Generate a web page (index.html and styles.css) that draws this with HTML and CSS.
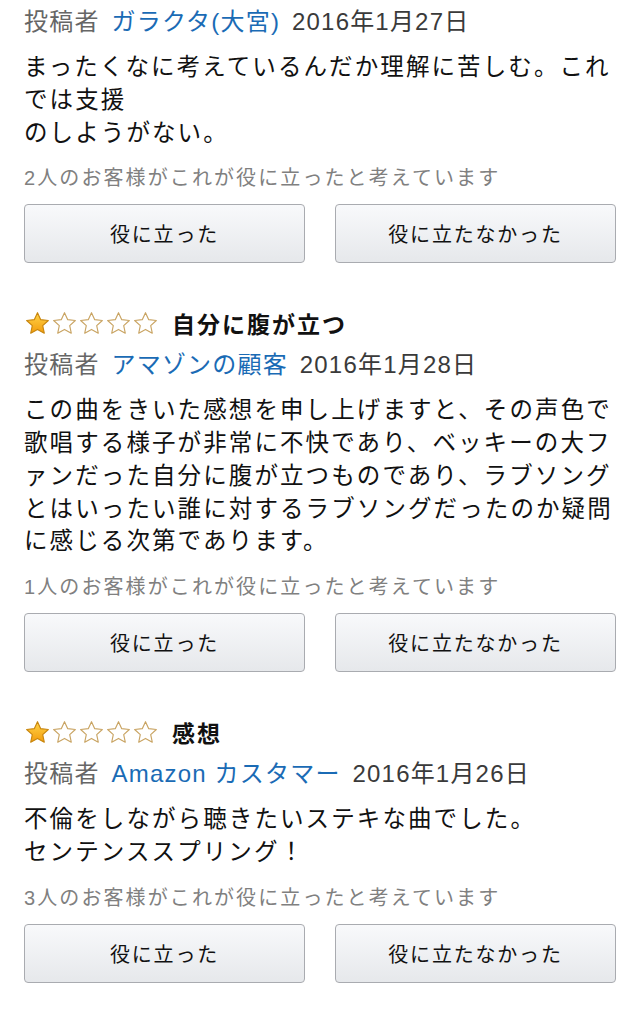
FILE: index.html
```html
<!DOCTYPE html>
<html lang="ja">
<head>
<meta charset="utf-8">
<title>カスタマーレビュー</title>
<link rel="stylesheet" href="styles.css">
</head>
<body>
<svg class="defs" width="0" height="0" aria-hidden="true">
  <defs>
    <linearGradient id="gold" x1="0" y1="0" x2="0" y2="1">
      <stop offset="0" stop-color="#ffd54a"/>
      <stop offset="1" stop-color="#f39c0c"/>
    </linearGradient>
    <path id="star" d="M12 1.6l3.1 6.7 7.3.8-5.4 5 1.5 7.2L12 17.7l-6.5 3.6 1.5-7.2-5.4-5 7.3-.8z"/>
  </defs>
</svg>
<main class="reviews">

  <section class="review">
    <div class="byline"><span class="label">投稿者</span> <a class="author" href="#">ガラクタ(大宮)</a> <span class="date">2016年1月27日</span></div>
    <p class="text">まったくなに考えているんだか理解に苦しむ。これでは支援<br>のしようがない。</p>
    <p class="helpful">2人のお客様がこれが役に立ったと考えています</p>
    <div class="votes">
      <button class="vote">役に立った</button>
      <button class="vote">役に立たなかった</button>
    </div>
  </section>

  <section class="review">
    <div class="title">
      <span class="stars">
        <svg viewBox="0 0 24 24" class="star on"><use href="#star"/></svg>
        <svg viewBox="0 0 24 24" class="star"><use href="#star"/></svg>
        <svg viewBox="0 0 24 24" class="star"><use href="#star"/></svg>
        <svg viewBox="0 0 24 24" class="star"><use href="#star"/></svg>
        <svg viewBox="0 0 24 24" class="star"><use href="#star"/></svg>
      </span>
      <strong class="headline">自分に腹が立つ</strong>
    </div>
    <div class="byline"><span class="label">投稿者</span> <a class="author" href="#">アマゾンの顧客</a> <span class="date">2016年1月28日</span></div>
    <p class="text">この曲をきいた感想を申し上げますと、その声色で歌唱する様子が非常に不快であり、ベッキーの大ファンだった自分に腹が立つものであり、ラブソングとはいったい誰に対するラブソングだったのか疑問に感じる次第であります。</p>
    <p class="helpful">1人のお客様がこれが役に立ったと考えています</p>
    <div class="votes">
      <button class="vote">役に立った</button>
      <button class="vote">役に立たなかった</button>
    </div>
  </section>

  <section class="review">
    <div class="title">
      <span class="stars">
        <svg viewBox="0 0 24 24" class="star on"><use href="#star"/></svg>
        <svg viewBox="0 0 24 24" class="star"><use href="#star"/></svg>
        <svg viewBox="0 0 24 24" class="star"><use href="#star"/></svg>
        <svg viewBox="0 0 24 24" class="star"><use href="#star"/></svg>
        <svg viewBox="0 0 24 24" class="star"><use href="#star"/></svg>
      </span>
      <strong class="headline">感想</strong>
    </div>
    <div class="byline"><span class="label">投稿者</span> <a class="author" href="#">Amazon カスタマー</a> <span class="date">2016年1月26日</span></div>
    <p class="text">不倫をしながら聴きたいステキな曲でした。<br>センテンススプリング！</p>
    <p class="helpful">3人のお客様がこれが役に立ったと考えています</p>
    <div class="votes">
      <button class="vote">役に立った</button>
      <button class="vote">役に立たなかった</button>
    </div>
  </section>

</main>
</body>
</html>
```
FILE: styles.css
```css
html, body {
  margin: 0;
  padding: 0;
  background: #ffffff;
}

body {
  font-family: "Liberation Sans", "Noto Sans CJK JP", sans-serif;
  color: #111111;
}

.defs {
  position: absolute;
  width: 0;
  height: 0;
}

.reviews {
  padding: 0 24px;
}

.review {
  margin-bottom: 40px;
}

.title {
  display: flex;
  align-items: center;
  height: 40px;
  gap: 13px;
}

.stars {
  display: flex;
}

.star {
  width: 27px;
  height: 25px;
  display: block;
}

.star use {
  fill: #ffffff;
  stroke: #c9a463;
  stroke-width: 1.1;
  stroke-linejoin: round;
}

.star.on use {
  fill: url(#gold);
  stroke: #c8860e;
}

.headline {
  font-size: 23px;
  font-weight: 700;
  letter-spacing: 2px;
  color: #111111;
}

.byline {
  line-height: 44px;
  font-size: 24px;
  letter-spacing: 1.2px;
  white-space: nowrap;
}

.label {
  color: #666666;
}

.author {
  margin-left: 4px;
  color: #1a6bb5;
  text-decoration: none;
}

.date {
  margin-left: 4px;
  color: #3a3a3a;
}

.text {
  margin: 7px 0 0;
  font-size: 23.5px;
  line-height: 32.75px;
  letter-spacing: 2.1px;
  color: #111111;
}

.helpful {
  margin: 14px 0 0;
  font-size: 20px;
  line-height: 30px;
  letter-spacing: 2.1px;
  color: #808080;
}

.votes {
  margin-top: 11px;
  display: grid;
  grid-template-columns: 1fr 1fr;
  gap: 30px;
}

.vote {
  height: 59px;
  border: 1px solid #a9abb0;
  border-radius: 4px;
  background: linear-gradient(#f8f9fb, #e6e8eb);
  font-family: "Liberation Sans", "Noto Sans CJK JP", sans-serif;
  font-size: 20px;
  letter-spacing: 1.8px;
  color: #111111;
  padding: 0;
}
```
